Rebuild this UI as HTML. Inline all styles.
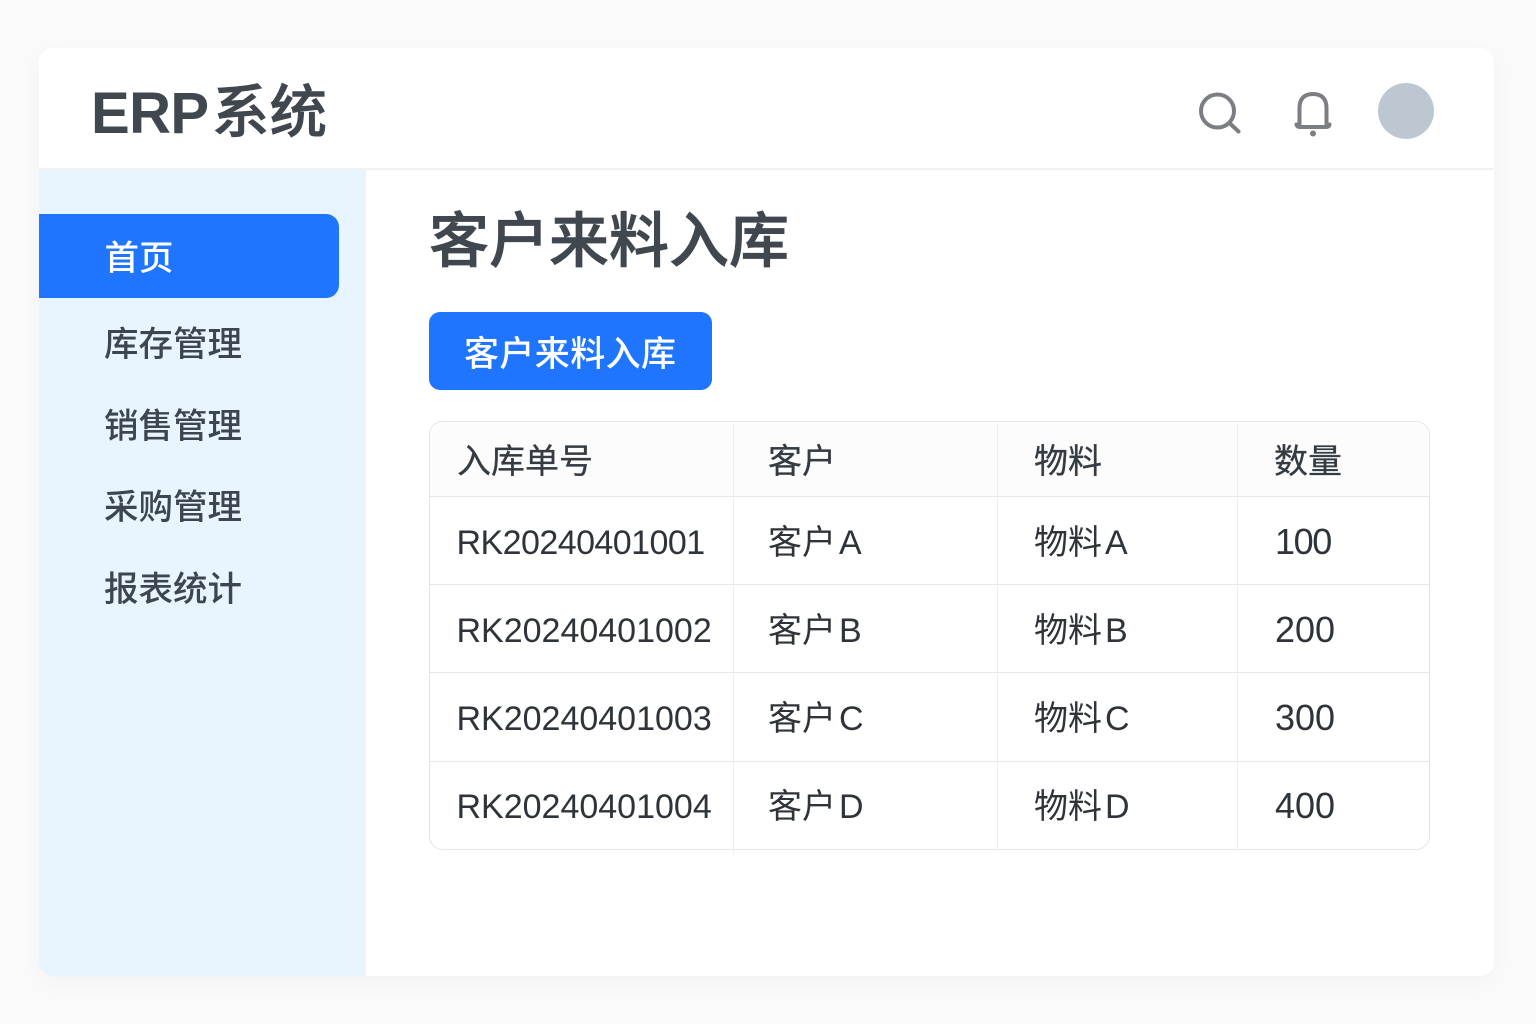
<!DOCTYPE html>
<html lang="zh"><head><meta charset="utf-8"><title>ERP系统</title>
<style>
*{box-sizing:border-box;margin:0;padding:0}
html,body{width:1536px;height:1024px;overflow:hidden;background:#fafafa;font-family:"Liberation Sans","Noto Sans CJK SC",sans-serif}
.card{position:absolute;left:39px;top:48px;width:1455px;height:928px;background:#fff;border-radius:14px;box-shadow:0 6px 24px rgba(0,0,0,.035);overflow:hidden}
.side{position:absolute;left:39px;top:169px;width:327px;height:807px;background:#e8f4fe;border-radius:0 0 0 14px}
.hline{position:absolute;left:39px;top:168px;width:1455px;height:2px;background:#f1f2f4}
.t{position:absolute;white-space:nowrap;line-height:1}
.erp{left:91px;top:85px;font-size:58px;font-weight:700;color:#41474e;letter-spacing:-.6px}
.logo{left:212px;top:85px;font-size:57.500px;font-weight:500;color:#41474e;-webkit-text-stroke:.6px #41474e}
.nav{left:104px;font-size:34.500px;color:#3d4650;font-weight:500}
.active{position:absolute;left:39px;top:213.500px;width:300px;height:84.500px;background:#1f75fe;border-radius:0 13px 13px 0}
.h1{left:429px;top:212px;font-size:60px;font-weight:500;color:#41474e;-webkit-text-stroke:.7px #41474e}
.btn{position:absolute;left:429px;top:312px;width:283px;height:78px;background:#1f75fe;border-radius:11px}
.tb{position:absolute;left:429px;top:421px;width:1001px;height:429px;border:1px solid #e2e4e7;border-radius:14px;overflow:hidden}
.thead{position:absolute;left:431px;top:423px;width:997px;height:73px;background:#fcfcfd;border-radius:13px 13px 0 0}
.r{position:absolute;left:430px;width:999px;height:1px;background:#e4e6e8}
.c{position:absolute;top:423px;width:1px;height:432px;background:#edeef0}
.td{font-size:34px;color:#2e343a}
.td i{font-style:normal;margin-left:3px}
.th{font-size:34px;color:#353b42;font-weight:400;-webkit-text-stroke:.3px #353b42}
.n{font-size:36px}
</style></head><body>
<div class="card"></div>
<div class="side"></div>
<div class="hline"></div>
<div class="t erp">ERP</div><div class="t logo">系统</div>
<svg style="position:absolute;left:1190px;top:85px" width="60" height="55" viewBox="0 0 60 55" fill="none" stroke="#7b7e82" stroke-width="4" stroke-linecap="round">
<circle cx="27.500" cy="26" r="16.500"/><path d="M40 38.500l8.500 8"/></svg>
<svg style="position:absolute;left:1290px;top:85px" width="46" height="55" viewBox="0 0 46 55" fill="none" stroke="#7b7e82" stroke-width="4" stroke-linecap="round" stroke-linejoin="round">
<path d="M9.500 40V23C9.500 13.500 14.500 9 23 9s13.500 4.500 13.500 14v17"/><path d="M6.500 39.500c.5 2 1.500 2.500 3.500 2.500h26c2 0 3-.5 3.500-2.500"/><circle cx="23" cy="48.500" r="3" fill="#7b7e82" stroke="none"/></svg>
<div style="position:absolute;left:1378px;top:83px;width:56px;height:56px;border-radius:50%;background:#bcc7d2"></div>
<div class="active"></div>
<div class="t nav" style="top:242px;color:#fff;left:104.500px">首页</div>
<div class="t nav" style="top:328px">库存管理</div>
<div class="t nav" style="top:410px">销售管理</div>
<div class="t nav" style="top:491px">采购管理</div>
<div class="t nav" style="top:573px">报表统计</div>
<div class="t h1">客户来料入库</div>
<div class="btn"></div>
<div class="t" style="left:464px;top:337px;font-size:35px;letter-spacing:.4px;color:#fff;font-weight:500">客户来料入库</div>
<div class="thead"></div>
<div class="tb"></div>
<div class="r" style="top:496px"></div><div class="r" style="top:584px"></div><div class="r" style="top:672px"></div><div class="r" style="top:761px"></div>
<div class="c" style="left:733px"></div><div class="c" style="left:997px;height:426px"></div><div class="c" style="left:1237px;height:426px"></div>
<div class="t th" style="left:457px;top:445px">入库单号</div><div class="t th" style="left:768px;top:445px">客户</div><div class="t th" style="left:1034px;top:445px">物料</div><div class="t th" style="left:1274px;top:445px">数量</div>
<div class="t td" style="left:456.500px;top:526px;letter-spacing:-.55px">RK20240401001</div><div class="t td" style="left:768px;top:526px">客户<i>A</i></div><div class="t td" style="left:1034px;top:526px">物料<i>A</i></div><div class="t td n" style="left:1275px;top:524px;letter-spacing:-1.4px">100</div>
<div class="t td" style="left:456.500px;top:614px">RK20240401002</div><div class="t td" style="left:768px;top:614px">客户<i>B</i></div><div class="t td" style="left:1034px;top:614px">物料<i>B</i></div><div class="t td n" style="left:1275px;top:612px">200</div>
<div class="t td" style="left:456.500px;top:702px">RK20240401003</div><div class="t td" style="left:768px;top:702px">客户<i>C</i></div><div class="t td" style="left:1034px;top:702px">物料<i>C</i></div><div class="t td n" style="left:1275px;top:700px">300</div>
<div class="t td" style="left:456.500px;top:790px">RK20240401004</div><div class="t td" style="left:768px;top:790px">客户<i>D</i></div><div class="t td" style="left:1034px;top:790px">物料<i>D</i></div><div class="t td n" style="left:1275px;top:788px">400</div>
</body></html>
